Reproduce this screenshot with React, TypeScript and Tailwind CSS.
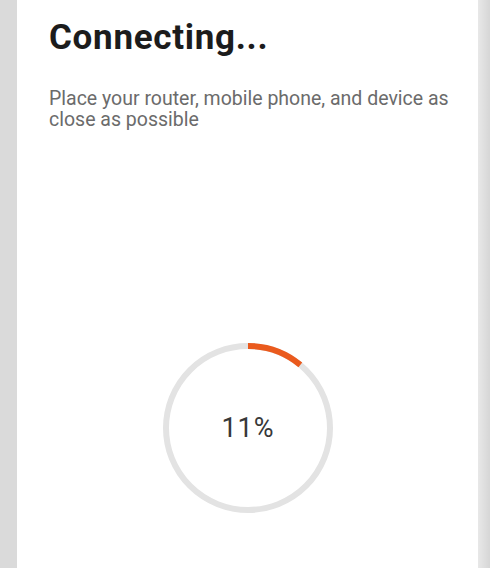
const pct = 11;
const r = 82;
const circ = 2 * Math.PI * r;

function ProgressRing() {
  return (
    <div className="relative w-[176px] h-[176px]">
      <svg width="176" height="176" viewBox="0 0 176 176" className="absolute inset-0">
        <circle cx="88" cy="88" r={r} fill="none" stroke="#e3e3e3" strokeWidth="6" />
        <circle
          cx="88"
          cy="88"
          r={r}
          fill="none"
          stroke="#ea5a1d"
          strokeWidth="6"
          strokeDasharray={`${(circ * pct) / 100} ${circ}`}
          transform="rotate(-90 88 88)"
        />
      </svg>
      <div className="absolute inset-0 flex items-center justify-center text-[27px] text-[#383838] tracking-[1px]">
        {pct}%
      </div>
    </div>
  );
}

export default function App() {
  return (
    <div className="w-[503px] h-[583px] bg-white font-['Roboto',sans-serif]">
      <div className="flex h-[568px]">
        <div className="w-[17px] bg-[#dadada]" />
        <div className="w-[461px] flex flex-col bg-white pl-[32px] pr-[10px]">
          <h1 className="mt-[18px] text-[35px] leading-[40px] font-bold text-[#1c1c1c] tracking-[0.7px]">
            Connecting...
          </h1>
          <p className="mt-[30px] text-[19.5px] leading-[21px] text-[#6b6b6b]">
            Place your router, mobile phone, and device as close as possible
          </p>
          <div className="mt-[210px] ml-[111px]">
            <ProgressRing />
          </div>
        </div>
        <div className="w-[12px] bg-gradient-to-r from-[#e8e8e8] to-[#d6d6d6]" />
      </div>
    </div>
  );
}
